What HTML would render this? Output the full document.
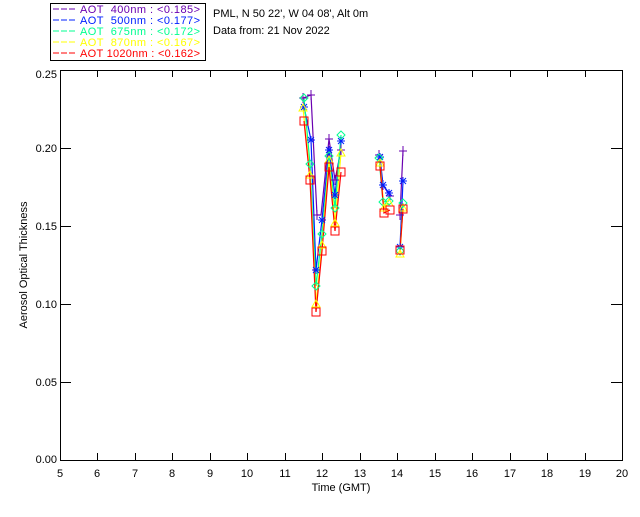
<!DOCTYPE html>
<html><head><style>
body{margin:0;background:#fff;width:640px;height:512px;overflow:hidden}
svg text{font-family:"Liberation Sans",sans-serif;font-size:11px;white-space:pre}
</style></head><body>
<svg width="640" height="512" xmlns="http://www.w3.org/2000/svg">
<defs>
<g id="pp"><path d="M-4 0H4M0 -5V5" stroke="#6a00b0" fill="none"/></g>
<g id="bs"><path d="M-4 0H4M0 -4V4M-3 -3L3 3M-3 3L3 -3" stroke="#0020ff" fill="none"/></g>
<g id="gd"><path d="M0 -4L4 0L0 4L-4 0Z" stroke="#00ff90" fill="none"/></g>
<g id="yt"><path d="M0 -4L4 3H-4Z" stroke="#ffff00" fill="none"/></g>
<g id="rs"><rect x="-4" y="-4" width="8" height="8" stroke="#ff0000" fill="none"/></g>
</defs>
<rect x="50.5" y="3.5" width="155" height="57" fill="none" stroke="#000"/>
<g>
<line x1="53" y1="9" x2="75" y2="9" stroke="#6a00b0" stroke-dasharray="6,2"/><text x="80" y="13" fill="#6a00b0" xml:space="preserve" textLength="120" lengthAdjust="spacing">AOT  400nm : &lt;0.185&gt;</text>
<line x1="53" y1="20" x2="75" y2="20" stroke="#0020ff" stroke-dasharray="6,2"/><text x="80" y="24" fill="#0020ff" xml:space="preserve" textLength="120" lengthAdjust="spacing">AOT  500nm : &lt;0.177&gt;</text>
<line x1="53" y1="31" x2="75" y2="31" stroke="#00ff90" stroke-dasharray="6,2"/><text x="80" y="35" fill="#00ff90" xml:space="preserve" textLength="120" lengthAdjust="spacing">AOT  675nm : &lt;0.172&gt;</text>
<line x1="53" y1="42" x2="75" y2="42" stroke="#ffff00" stroke-dasharray="6,2"/><text x="80" y="46" fill="#ffff00" xml:space="preserve" textLength="120" lengthAdjust="spacing">AOT  870nm : &lt;0.167&gt;</text>
<line x1="53" y1="53" x2="75" y2="53" stroke="#ff0000" stroke-dasharray="6,2"/><text x="80" y="57" fill="#ff0000" xml:space="preserve" textLength="120" lengthAdjust="spacing">AOT 1020nm : &lt;0.162&gt;</text>
</g>
<text x="213" y="17">PML, N 50 22', W 04 08', Alt 0m</text>
<text x="213" y="34">Data from: 21 Nov 2022</text>
<rect x="60.5" y="70.5" width="562" height="390" fill="none" stroke="#000"/>
<g stroke="#000">
<path d="M97.5 460V453M135.5 460V453M172.5 460V453M210.5 460V453M247.5 460V453M285.5 460V453M322.5 460V453M360.5 460V453M397.5 460V453M435.5 460V453M472.5 460V453M510.5 460V453M547.5 460V453M585.5 460V453"/>
<path d="M97.5 70V77M135.5 70V77M172.5 70V77M210.5 70V77M247.5 70V77M285.5 70V77M322.5 70V77M360.5 70V77M397.5 70V77M435.5 70V77M472.5 70V77M510.5 70V77M547.5 70V77M585.5 70V77"/>
<path d="M60 148.5H71M60 226.5H71M60 304.5H71M60 382.5H71M622 148.5H611M622 226.5H611M622 304.5H611M622 382.5H611"/>
</g>
<g text-anchor="end">
<text x="57" y="78">0.25</text><text x="57" y="152">0.20</text><text x="57" y="230">0.15</text><text x="57" y="308">0.10</text><text x="57" y="386">0.05</text><text x="57" y="463">0.00</text>
</g>
<g text-anchor="middle">
<text x="60" y="477">5</text><text x="97" y="477">6</text><text x="135" y="477">7</text><text x="172" y="477">8</text><text x="210" y="477">9</text><text x="247" y="477">10</text><text x="285" y="477">11</text><text x="322" y="477">12</text><text x="360" y="477">13</text><text x="397" y="477">14</text><text x="435" y="477">15</text><text x="472" y="477">16</text><text x="510" y="477">17</text><text x="547" y="477">18</text><text x="585" y="477">19</text><text x="622" y="477">20</text>
<text x="341" y="491">Time (GMT)</text>
<text transform="translate(27,265) rotate(-90)">Aerosol Optical Thickness</text>
</g>
<g fill="none" stroke-width="1.2">
<polyline stroke="#6a00b0" points="303,98 311,95 317,215 321,215 329,139 335,180 341,150"/>
<polyline stroke="#6a00b0" points="379,155 383,185 390,196"/><polyline stroke="#6a00b0" points="400,215 403,151"/>
<polyline stroke="#0020ff" points="304,107 311,140 316,270 322,220 329,150 335,195 341,141"/>
<polyline stroke="#0020ff" points="380,157 383,185 389,193"/><polyline stroke="#0020ff" points="400,247 403,181"/>
<polyline stroke="#00ff90" points="304,98 310,164 316,286 322,234 329,156 335,208 341,135"/>
<polyline stroke="#00ff90" points="379,158 383,202 389,201"/><polyline stroke="#00ff90" points="400,251 403,203"/>
<polyline stroke="#ffff00" points="303,108 310,175 316,304 322,245 329,160 335,223 341,153"/>
<polyline stroke="#ffff00" points="380,163 384,208 389,203"/><polyline stroke="#ffff00" points="400,254 403,208"/>
<polyline stroke="#ff0000" points="304,121 310,180 316,312 322,251 329,167 335,231 341,172"/>
<polyline stroke="#ff0000" points="380,166 384,213 390,210"/><polyline stroke="#ff0000" points="400,250 403,209"/>
</g>
<g>
<use href="#pp" x="303" y="98"/><use href="#pp" x="311" y="95"/><use href="#pp" x="317" y="215"/><use href="#pp" x="329" y="139"/><use href="#pp" x="335" y="180"/><use href="#pp" x="341" y="150"/><use href="#pp" x="379" y="155"/><use href="#pp" x="383" y="185"/><use href="#pp" x="390" y="196"/><use href="#pp" x="400" y="215"/><use href="#pp" x="403" y="151"/>
<use href="#bs" x="304" y="107"/><use href="#bs" x="311" y="140"/><use href="#bs" x="316" y="270"/><use href="#bs" x="322" y="220"/><use href="#bs" x="329" y="150"/><use href="#bs" x="335" y="195"/><use href="#bs" x="341" y="141"/><use href="#bs" x="380" y="157"/><use href="#bs" x="383" y="185"/><use href="#bs" x="389" y="193"/><use href="#bs" x="400" y="247"/><use href="#bs" x="403" y="181"/>
<use href="#gd" x="304" y="98"/><use href="#gd" x="310" y="164"/><use href="#gd" x="316" y="286"/><use href="#gd" x="322" y="234"/><use href="#gd" x="329" y="156"/><use href="#gd" x="335" y="208"/><use href="#gd" x="341" y="135"/><use href="#gd" x="379" y="158"/><use href="#gd" x="383" y="202"/><use href="#gd" x="389" y="201"/><use href="#gd" x="400" y="251"/><use href="#gd" x="403" y="203"/>
<use href="#yt" x="303" y="108"/><use href="#yt" x="310" y="175"/><use href="#yt" x="316" y="304"/><use href="#yt" x="322" y="245"/><use href="#yt" x="329" y="160"/><use href="#yt" x="335" y="223"/><use href="#yt" x="341" y="153"/><use href="#yt" x="380" y="163"/><use href="#yt" x="384" y="208"/><use href="#yt" x="389" y="203"/><use href="#yt" x="400" y="254"/><use href="#yt" x="403" y="208"/>
<use href="#rs" x="304" y="121"/><use href="#rs" x="310" y="180"/><use href="#rs" x="316" y="312"/><use href="#rs" x="322" y="251"/><use href="#rs" x="329" y="167"/><use href="#rs" x="335" y="231"/><use href="#rs" x="341" y="172"/><use href="#rs" x="380" y="166"/><use href="#rs" x="384" y="213"/><use href="#rs" x="390" y="210"/><use href="#rs" x="400" y="250"/><use href="#rs" x="403" y="209"/>
</g>
</svg>
</body></html>
